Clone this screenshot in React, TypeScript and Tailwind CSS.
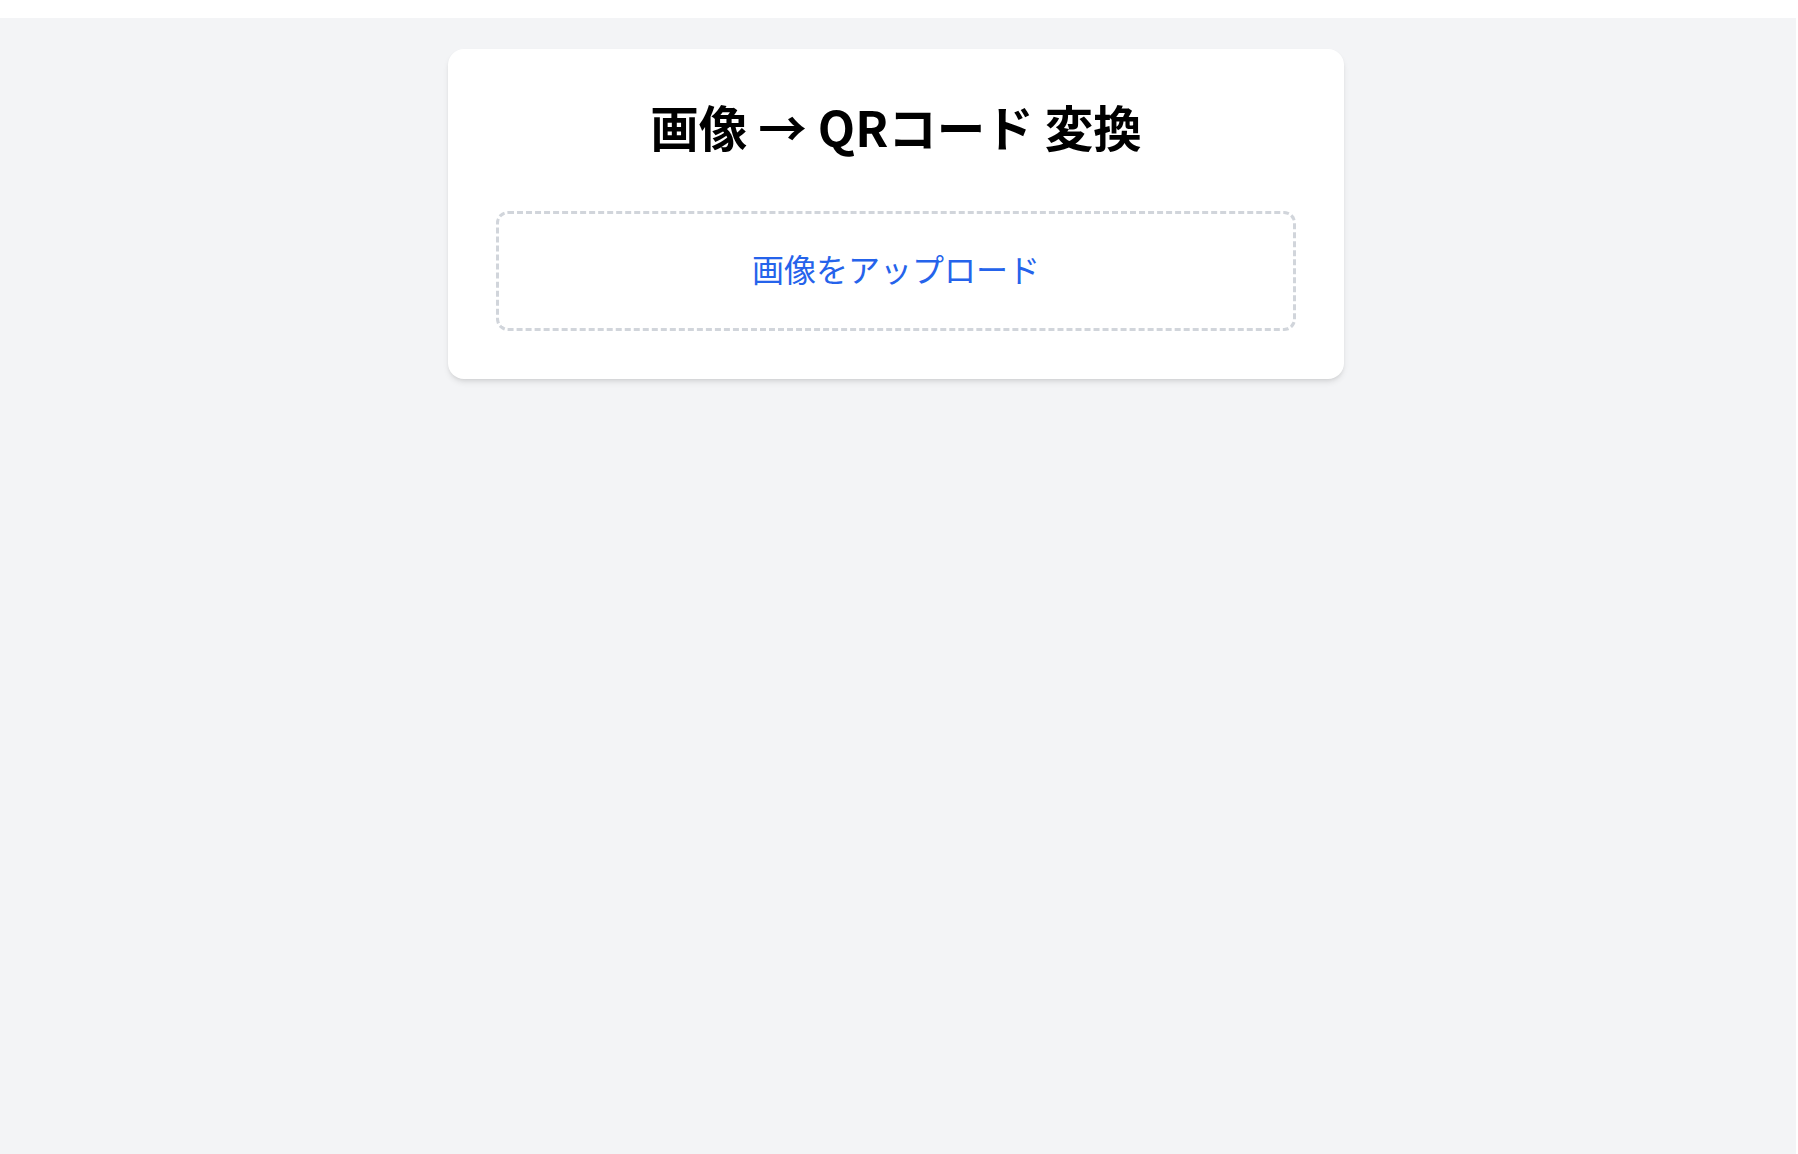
import { useRef, useState } from "react";

const App = () => {
  const inputRef = useRef<HTMLInputElement>(null);
  const [fileName, setFileName] = useState<string | null>(null);

  return (
    <div className="min-h-screen flex flex-col bg-white font-['Noto_Sans_CJK_JP',sans-serif]">
      <div className="flex-1 mt-[18px] mr-[2px] bg-[#f3f4f6] pt-[31px] pl-4 pr-[20px]">
        <div className="mx-auto w-full max-w-4xl bg-white rounded-2xl shadow-md p-12">
          <h1 className="text-center text-[48.5px] font-bold leading-[58px] text-black mb-[56px]">
            画像 → QRコード 変換
          </h1>
          <label
            onClick={() => inputRef.current?.click()}
            className="block cursor-pointer border-[3px] border-dashed border-[#d1d5db] rounded-xl pt-[37px] pb-[41px] text-center"
          >
            <span className="text-[32px] leading-[34px] text-[#2563eb]">
              {fileName ?? "画像をアップロード"}
            </span>
          </label>
          <input
            ref={inputRef}
            type="file"
            accept="image/*"
            className="hidden"
            onChange={(e) => setFileName(e.target.files?.[0]?.name ?? null)}
          />
        </div>
      </div>
    </div>
  );
};

export default App;
